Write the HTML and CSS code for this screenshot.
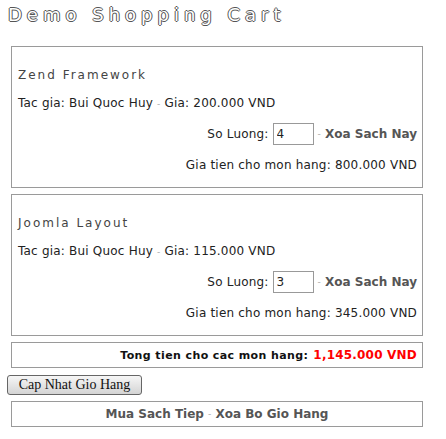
FILE: index.html
```html
<!DOCTYPE html>
<html>
<head>
<meta charset="utf-8">
<link rel="stylesheet" href="styles.css">
</head>
<body>
<div class="title">Demo Shopping Cart</div>

<div class="item box">
  <div class="line name">Zend Framework</div>
  <div class="line">Tac gia: Bui Quoc Huy <span class="sep">-</span> Gia: 200.000 VND</div>
  <div class="qty-row">
    <span>So Luong:</span>
    <input class="qty" type="text" value="4">
    <span class="sep">-</span>
    <a class="action">Xoa Sach Nay</a>
  </div>
  <div class="line right">Gia tien cho mon hang: 800.000 VND</div>
</div>

<div class="item box">
  <div class="line name">Joomla Layout</div>
  <div class="line">Tac gia: Bui Quoc Huy <span class="sep">-</span> Gia: 115.000 VND</div>
  <div class="qty-row">
    <span>So Luong:</span>
    <input class="qty" type="text" value="3">
    <span class="sep">-</span>
    <a class="action">Xoa Sach Nay</a>
  </div>
  <div class="line right">Gia tien cho mon hang: 345.000 VND</div>
</div>

<div class="total box">
  <span class="total-label">Tong tien cho cac mon hang:</span>
  <span class="total-value">1,145.000 VND</span>
</div>

<button class="update">Cap Nhat Gio Hang</button>

<div class="links box">
  <a class="action">Mua Sach Tiep</a>
  <span class="sep">-</span>
  <a class="action">Xoa Bo Gio Hang</a>
</div>
</body>
</html>
```

FILE: styles.css
```css
html, body {
  margin: 0;
  background: #fff;
}
body {
  padding: 4px 8px 0 8px;
  font-family: "DejaVu Sans", Verdana, sans-serif;
  font-size: 12px;
  letter-spacing: 0.2px;
  color: #222;
}
.title {
  font-family: "DejaVu Sans", Verdana, sans-serif;
  font-size: 18px;
  line-height: 22px;
  letter-spacing: 5px;
  color: #fff;
  text-shadow: 1px 0 #555, -1px 0 #555, 0 1px #555, 0 -1px #555;
  margin-bottom: 20px;
}
.box {
  box-sizing: border-box;
  width: 412px;
  margin-left: 3px;
  border: 1px solid #9a9a9a;
}
.item {
  display: flex;
  flex-direction: column;
  gap: 12px;
  padding: 20px 5px 14px 6px;
  margin-bottom: 6px;
}
.line {
  line-height: 16px;
  height: 16px;
  white-space: nowrap;
}
.name {
  color: #444;
  letter-spacing: 2px;
}
.right {
  text-align: right;
}
.sep {
  color: #aaa;
  font-size: 9px;
}
.qty-row {
  display: flex;
  justify-content: flex-end;
  align-items: center;
  height: 22px;
  gap: 4px;
}
.qty {
  box-sizing: border-box;
  width: 41px;
  height: 22px;
  border: 1px solid #999;
  padding: 1px 3px;
  margin: 0;
  font-family: "DejaVu Sans", Verdana, sans-serif;
  font-size: 12px;
  color: #222;
}
.action {
  font-weight: bold;
  font-size: 12px;
  letter-spacing: 0;
  color: #555;
}
.total {
  height: 26px;
  display: flex;
  justify-content: flex-end;
  align-items: center;
  gap: 5px;
  padding-right: 5px;
  margin-bottom: 7px;
}
.total-label {
  font-weight: bold;
  color: #111;
  font-size: 11px;
  letter-spacing: 0.4px;
}
.total-value {
  font-weight: bold;
  color: #f00;
  font-size: 12px;
  letter-spacing: 0.2px;
}
.update {
  display: block;
  box-sizing: border-box;
  width: 135px;
  height: 20px;
  margin: 0 0 6px -1px;
  padding: 0;
  font-family: "Liberation Serif", "Times New Roman", serif;
  font-size: 14px;
  letter-spacing: 0;
  color: #111;
  border: 1px solid #666;
  border-radius: 3px;
  background: linear-gradient(#f6f6f6, #d4d4d4);
}
.links {
  height: 26px;
  display: flex;
  justify-content: center;
  align-items: center;
  gap: 4px;
}
```
